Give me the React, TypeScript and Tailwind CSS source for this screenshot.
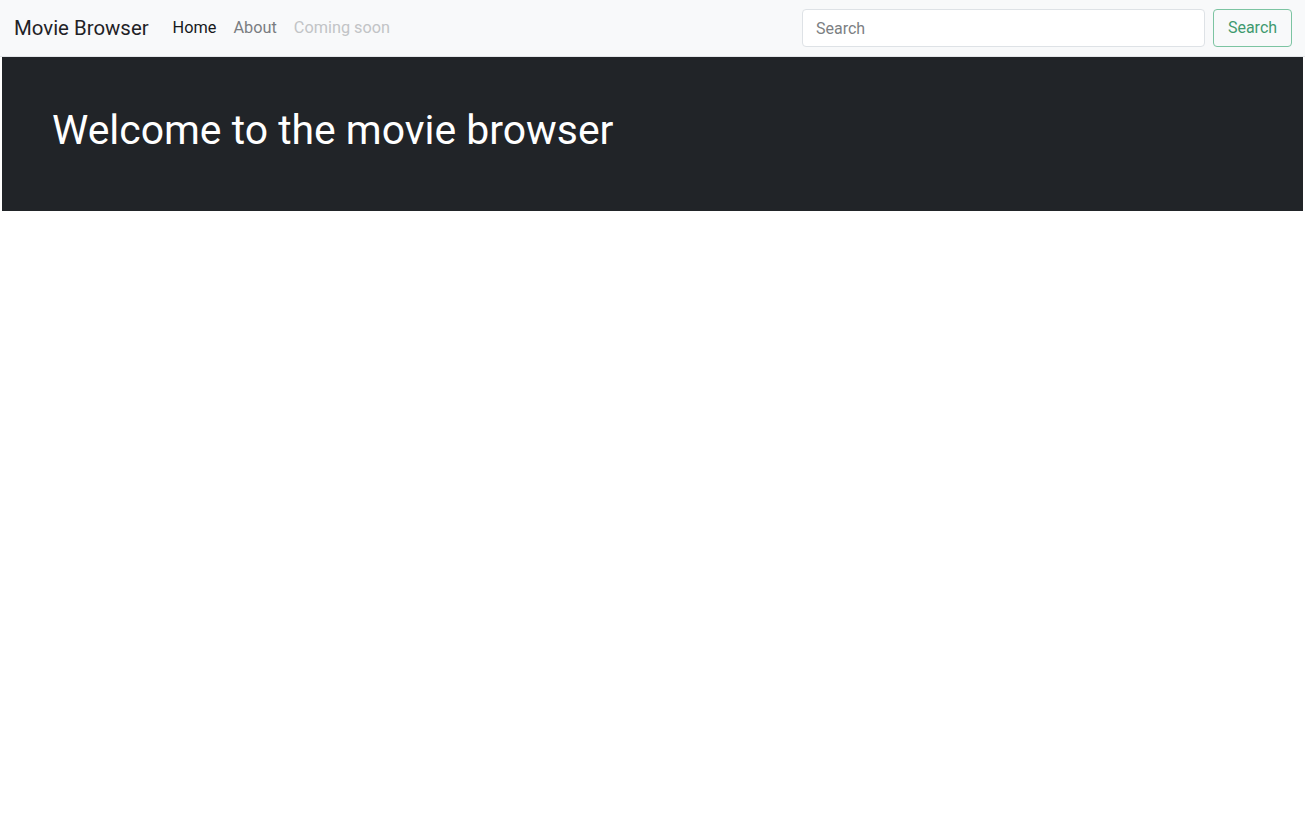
export default function App() {
  return (
    <div className="min-h-screen bg-white font-['Roboto',sans-serif] text-[#212529]">
      {/* Navbar */}
      <nav className="flex h-[57px] items-center justify-between border-b border-[#e3e5e8] bg-[#f8f9fa] pl-[14px] pr-[13px]">
        <div className="flex items-center">
          <span className="mr-[24px] text-[20.4px] text-[#1f2226]">Movie Browser</span>
          <div className="flex items-center gap-[17px] text-[16.3px]">
            <span className="text-[#15181b]">Home</span>
            <span className="text-[#7a7d81]">About</span>
            <span className="text-[#c2c4c6]">Coming soon</span>
          </div>
        </div>
        <div className="flex items-center gap-[8px]">
          <input
            placeholder="Search"
            className="h-[38px] w-[403px] rounded-[4px] border border-[#dee2e6] bg-white px-[13px] text-[16px] outline-none placeholder:text-[#7c7f83]"
          />
          <button className="h-[38px] w-[79px] rounded-[4px] border border-[#7cc4a2] text-[16px] text-[#3f9a6f]">
            Search
          </button>
        </div>
      </nav>

      {/* Jumbotron */}
      <header className="mx-[2px] flex h-[154px] items-center bg-[#212428] pb-[8px] pl-[50px]">
        <h1 className="text-[40.9px] leading-none text-white">Welcome to the movie browser</h1>
      </header>
    </div>
  );
}
